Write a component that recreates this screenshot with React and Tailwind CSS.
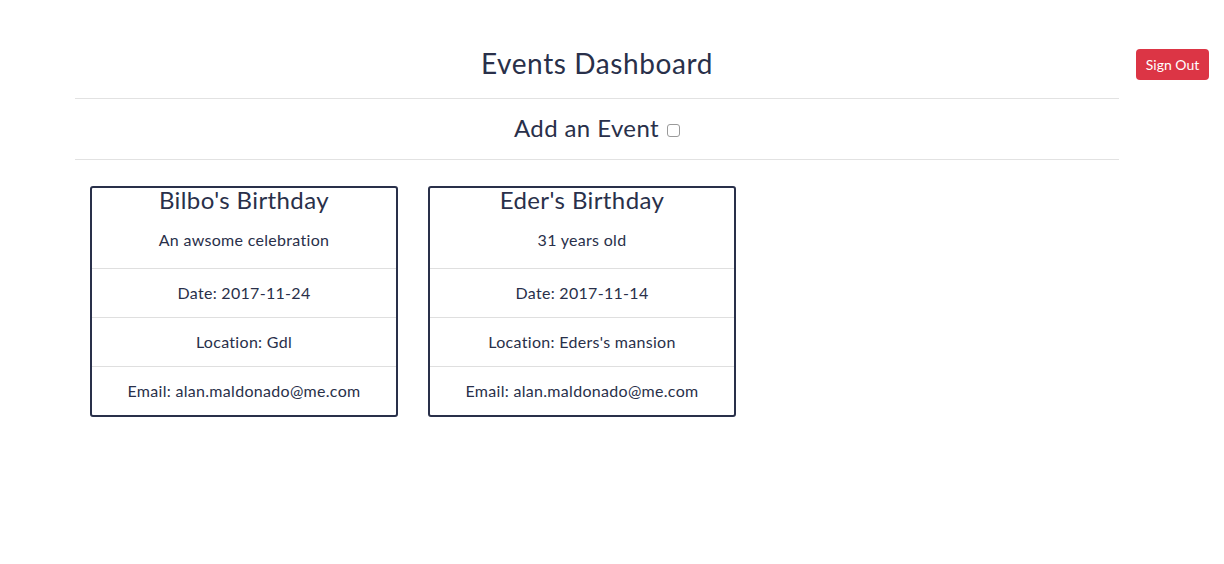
const events = [
  {
    title: "Bilbo's Birthday",
    description: "An awsome celebration",
    date: "2017-11-24",
    location: "Gdl",
    email: "alan.maldonado@me.com",
  },
  {
    title: "Eder's Birthday",
    description: "31 years old",
    date: "2017-11-14",
    location: "Eders's mansion",
    email: "alan.maldonado@me.com",
  },
];

function EventCard({ event }) {
  const { title, description, date, location, email } = event;
  return (
    <div className="w-[308px] border-2 border-[#29304a] rounded-[3px] text-center tracking-[0.3px]">
      <div className="border-b border-[#dfdfdf]">
        <h3 className="text-[24px] leading-[24px] tracking-[0.4px]">{title}</h3>
        <p className="mt-4 mb-4 text-[16px] leading-6">{description}</p>
      </div>
      <div className="py-3 leading-6 border-b border-[#dfdfdf]">Date: {date}</div>
      <div className="py-3 leading-6 border-b border-[#dfdfdf]">Location: {location}</div>
      <div className="py-3 leading-6">Email: {email}</div>
    </div>
  );
}

export default function App() {
  return (
    <div
      className="min-h-[564px] bg-white text-[#29304a] text-[16px]"
      style={{ fontFamily: "Lato, 'Open Sans', sans-serif" }}
    >
      <div className="flex items-start">
        <div className="ml-[75px] w-[1044px]">
          <div className="pt-[46px] pb-[18px] border-b border-[#e2e2e2]">
            <h1 className="text-center text-[28px] leading-[34px] tracking-[0.6px]">Events Dashboard</h1>
          </div>
          <div className="pt-[14px] pb-[17px] border-b border-[#e2e2e2] flex items-center justify-center">
            <h2 className="text-[24px] leading-[29px] tracking-[0.4px]">Add an Event</h2>
            <input
              type="checkbox"
              className="ml-2 mt-[5px] w-[13px] h-[13px] appearance-none border border-[#9a9a9a] rounded-[3px] bg-white"
            />
          </div>
          <div className="flex gap-[30px] pl-[15px] pt-[26px]">
            {events.map((event) => (
              <EventCard key={event.title} event={event} />
            ))}
          </div>
        </div>
        <button
          type="button"
          className="ml-[17px] mt-[49px] w-[73px] h-[31px] rounded bg-[#dc3545] text-white text-[14px]"
        >
          Sign Out
        </button>
      </div>
    </div>
  );
}
